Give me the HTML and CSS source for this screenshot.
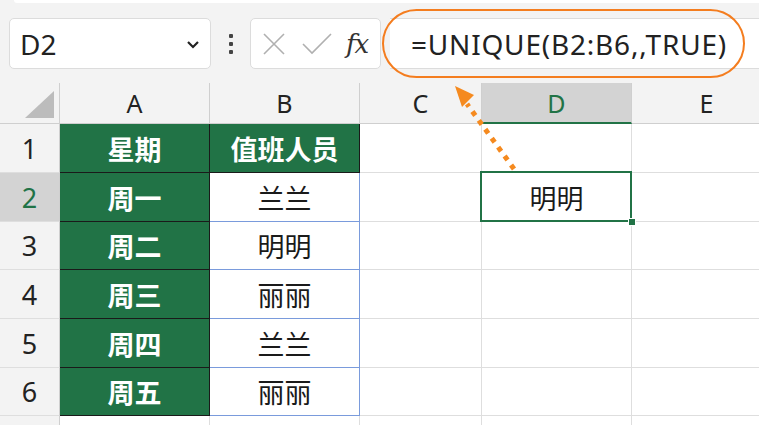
FILE: index.html
```html
<!DOCTYPE html>
<html lang="zh-CN">
  <head>
    <meta charset="UTF-8" />
    <title>UNIQUE 函数</title>
    <link rel="stylesheet" href="styles.css">
  </head>
  <body>
    <div class="toolbar">
      <div class="topline"></div>
      <div class="bar">
        <div class="namebox">
          <span>D2</span>
          <svg class="chev" width="14" height="9" viewBox="0 0 14 9"><path d="M2 2 L7 7 L12 2" fill="none" stroke="#222" stroke-width="2.2"/></svg>
        </div>
        <div class="dots"><i></i><i></i><i></i></div>
        <div class="fxbox">
          <svg width="24" height="24" viewBox="0 0 24 24"><path d="M2 2 L22 22 M22 2 L2 22" stroke="#b0b0b0" stroke-width="1.6"/></svg>
          <svg width="32" height="24" viewBox="0 0 32 24"><path d="M2 12 L11 21 L30 2" fill="none" stroke="#b0b0b0" stroke-width="1.6"/></svg>
          <span class="fx">fx</span>
        </div>
        <div class="formula">=UNIQUE(B2:B6,,TRUE)</div>
      </div>
    </div>

    <div class="sheet">
      <!-- 列标 -->
      <div class="hd corner"><b class="tri"></b></div>
      <div class="hd">A</div>
      <div class="hd">B</div>
      <div class="hd">C</div>
      <div class="hd on">D</div>
      <div class="hd">E</div>
      <!-- 1 -->
      <div class="rh">1</div>
      <div class="c g">星期</div>
      <div class="c g">值班人员</div>
      <div class="c"></div><div class="c"></div><div class="c"></div>
      <!-- 2 -->
      <div class="rh on">2</div>
      <div class="c g">周一</div>
      <div class="c b">兰兰</div>
      <div class="c"></div>
      <div class="c sel">明明</div>
      <div class="c"></div>
      <!-- 3 -->
      <div class="rh">3</div>
      <div class="c g">周二</div>
      <div class="c b">明明</div>
      <div class="c"></div><div class="c"></div><div class="c"></div>
      <!-- 4 -->
      <div class="rh">4</div>
      <div class="c g">周三</div>
      <div class="c b">丽丽</div>
      <div class="c"></div><div class="c"></div><div class="c"></div>
      <!-- 5 -->
      <div class="rh">5</div>
      <div class="c g">周四</div>
      <div class="c b">兰兰</div>
      <div class="c"></div><div class="c"></div><div class="c"></div>
      <!-- 6 -->
      <div class="rh">6</div>
      <div class="c g">周五</div>
      <div class="c b">丽丽</div>
      <div class="c"></div><div class="c"></div><div class="c"></div>
      <!-- 7 -->
      <div class="rh"></div>
      <div class="c"></div><div class="c"></div><div class="c"></div><div class="c"></div><div class="c"></div>
    </div>

    <!-- 标注 -->
    <div class="callout"></div>
    <svg class="arrow" width="759" height="425" viewBox="0 0 759 425">
      <line x1="514" y1="169" x2="467" y2="104" stroke="#f58a1f" stroke-width="5" stroke-dasharray="5 6"/>
      <polygon points="455,86 474,95 462,107" fill="#f58a1f"/>
    </svg>
  </body>
</html>
```

FILE: styles.css
```css
body {
  margin: 0;
  padding: 0;
  width: 759px;
  height: 425px;
  overflow: hidden;
  position: relative;
  background: #f3f3f3;
  font-family: "Noto Sans", "Noto Sans CJK SC", sans-serif;
  color: #222;
}
.toolbar {
  height: 83px;
  background: #f3f3f3;
}
.topline {
  height: 3px;
  background: #fff;
  border-radius: 0 0 0 6px;
  margin-left: 14px;
}
.bar {
  display: flex;
  align-items: stretch;
  height: 51px;
  margin-top: 15px;
}
.namebox {
  width: 202px;
  margin-left: 9px;
  box-sizing: border-box;
  background: #fff;
  border: 1px solid #dcdcdc;
  border-radius: 5px;
  display: flex;
  align-items: center;
  justify-content: space-between;
  padding: 0 10px 0 10px;
  font-size: 28px;
}
.chev {
  margin-top: 2px;
}
.dots {
  width: 39px;
  display: flex;
  flex-direction: column;
  align-items: center;
  justify-content: center;
  gap: 4px;
}
.dots i {
  width: 4px;
  height: 4px;
  border-radius: 1px;
  background: #444;
}
.fxbox {
  width: 131px;
  box-sizing: border-box;
  background: #fff;
  border: 1px solid #dcdcdc;
  border-radius: 5px;
  display: flex;
  align-items: center;
  padding-left: 11px;
  gap: 15px;
}
.fx {
  font-family: "DejaVu Serif", "Liberation Serif", serif;
  font-style: italic;
  font-size: 26px;
  color: #333;
  margin-left: -2px;
  letter-spacing: -1px;
}
.formula {
  flex: 1;
  margin-left: 9px;
  background: #fff;
  border-top: 1px solid #dcdcdc;
  border-bottom: 1px solid #dcdcdc;
  display: flex;
  align-items: center;
  padding-left: 21px;
  font-size: 28px;
  letter-spacing: 0.8px;
  color: #222;
}

.sheet {
  display: grid;
  grid-template-columns: 60px 150px 150px 122px 150px 150px;
  grid-template-rows: 41px 49px 49px 48px 49px 49px 48px 20px;
  width: 782px;
  background: #fff;
}
.sheet > div {
  box-sizing: border-box;
  border-right: 1px solid #dedede;
  border-bottom: 1px solid #dedede;
  display: flex;
  align-items: center;
  justify-content: center;
}
.hd {
  background: #f3f3f3;
  font-size: 25px;
  border-right-color: #cfcfcf !important;
  border-bottom-color: #cfcfcf !important;
}
.hd.on {
  background: #d3d3d3;
  color: #217346;
  border-bottom: 2px solid #217346 !important;
}
.corner {
  position: relative;
}
.tri {
  position: absolute;
  right: 5px;
  bottom: 5px;
  width: 0;
  height: 0;
  border-left: 29px solid transparent;
  border-bottom: 27px solid #bcbcbc;
}
.rh {
  background: #f3f3f3;
  font-size: 27px;
  border-right-color: #cfcfcf !important;
}
.rh.on {
  background: #d3d3d3;
  color: #217346;
}
.c {
  font-size: 27px;
  color: #1a1a1a;
  font-family: "Noto Sans CJK SC", sans-serif;
}
.c.g {
  background: #217346;
  color: #fff;
  font-weight: 700;
  border-right: 1px solid #1a1a1a !important;
  border-bottom: 1px solid #1a1a1a !important;
}
.c.b {
  border-right: 1px solid #7a9bdc !important;
  border-bottom: 1px solid #7a9bdc !important;
}
.c.sel {
  position: relative;
}
.c.sel::after {
  content: "";
  position: absolute;
  top: -2px;
  left: -2px;
  right: -1px;
  bottom: -1px;
  border: 2px solid #217346;
}
.c.sel::before {
  content: "";
  position: absolute;
  right: -5px;
  bottom: -5px;
  width: 6px;
  height: 6px;
  background: #217346;
  border: 1px solid #fff;
  z-index: 1;
}

.callout {
  position: absolute;
  left: 382px;
  top: 9px;
  width: 363px;
  height: 69px;
  box-sizing: border-box;
  border: 2.5px solid #f47d1f;
  border-radius: 35px;
}
.arrow {
  position: absolute;
  left: 0;
  top: 0;
}
```
